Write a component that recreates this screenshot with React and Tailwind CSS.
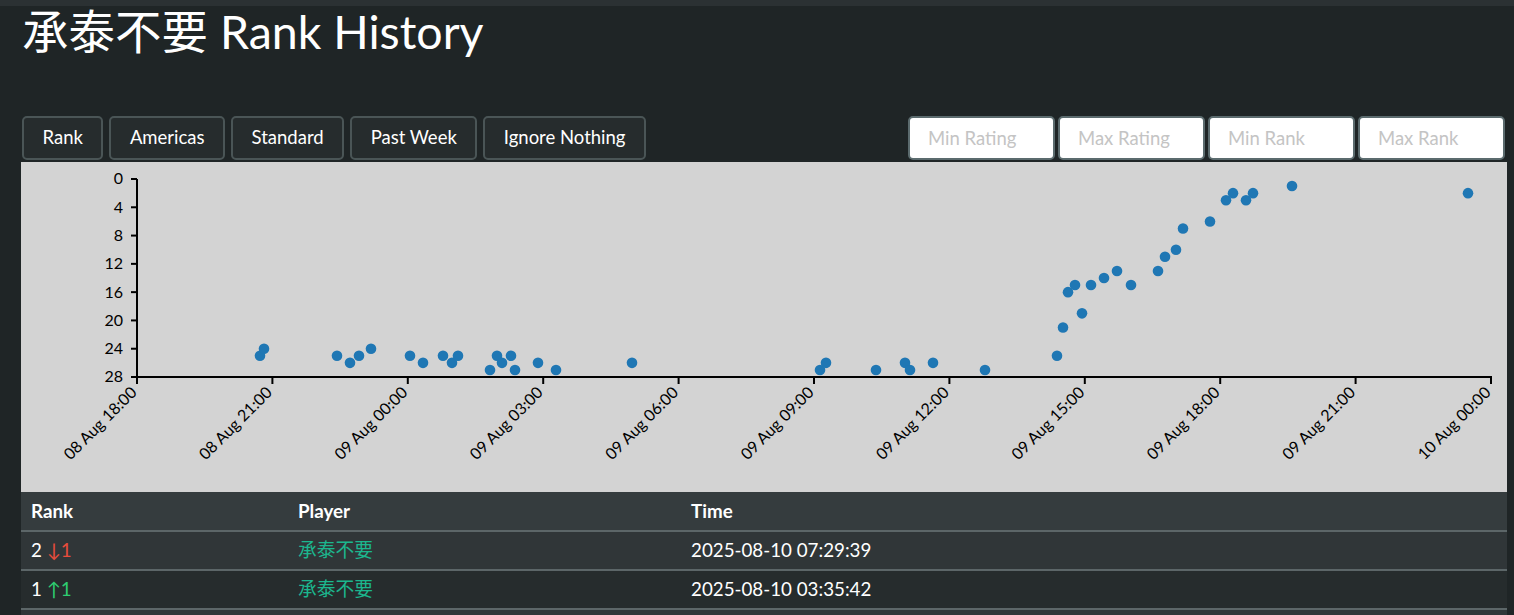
import React from "react";

const points = [
  [260, 25], [264, 24], [337, 25], [350, 26], [359, 25], [371, 24],
  [410, 25], [423, 26], [443, 25], [452, 26], [458, 25],
  [490, 27], [497, 25], [502, 26], [511, 25], [515, 27],
  [538, 26], [556, 27], [632, 26], [820, 27], [826, 26],
  [876, 27], [905, 26], [910, 27], [933, 26], [985, 27],
  [1057, 25], [1063, 21], [1068, 16], [1075, 15], [1082, 19],
  [1091, 15], [1104, 14], [1117, 13], [1131, 15], [1158, 13],
  [1165, 11], [1176, 10], [1183, 7], [1210, 6], [1226, 3],
  [1233, 2], [1246, 3], [1253, 2], [1292, 1], [1468, 2],
];

const xLabels = [
  "08 Aug 18:00", "08 Aug 21:00", "09 Aug 00:00", "09 Aug 03:00",
  "09 Aug 06:00", "09 Aug 09:00", "09 Aug 12:00", "09 Aug 15:00",
  "09 Aug 18:00", "09 Aug 21:00", "10 Aug 00:00",
];

const rows = [
  { rank: 2, dir: "down", delta: 1, time: "2025-08-10 07:29:39" },
  { rank: 1, dir: "up", delta: 1, time: "2025-08-10 03:35:42" },
];

const X0 = 116;
const X1 = 1470;
const Y0 = 17;
const Y1 = 215;
const yFor = (r) => Y0 + (r / 28) * (Y1 - Y0);

const Chart = () => (
  <svg width="1486" height="329" className="block">
    {/* y axis */}
    <line x1={X0} y1={Y0} x2={X0} y2={Y1} stroke="#000" strokeWidth="2" />
    {[0, 4, 8, 12, 16, 20, 24, 28].map((v) => (
      <g key={v} transform={`translate(${X0},${yFor(v)})`}>
        <line x1="-6" x2="0" stroke="#000" strokeWidth="2" />
        <text x="-14" dy="0.34em" textAnchor="end" fontSize="16" fill="#000">
          {v}
        </text>
      </g>
    ))}
    {/* x axis */}
    <line x1={X0} y1={Y1} x2={X1 + 1} y2={Y1} stroke="#000" strokeWidth="2" />
    {xLabels.map((l, i) => {
      const x = X0 + (i * (X1 - X0)) / 10;
      return (
        <g key={l} transform={`translate(${x},${Y1})`}>
          <line y1="0" y2="7" stroke="#000" strokeWidth="2" />
          <text
            transform="rotate(-45)"
            x="0"
            y="9"
            dx="-0.7em"
            dy="0.2em"
            textAnchor="end"
            fontSize="16"
            fill="#000"
          >
            {l}
          </text>
        </g>
      );
    })}
    {points.map(([x, r], i) => (
      <circle key={i} cx={x - 21} cy={yFor(r)} r="5.3" fill="#1f77b4" />
    ))}
  </svg>
);

const App = () => {
  const buttons = ["Rank", "Americas", "Standard", "Past Week", "Ignore Nothing"];
  const inputs = ["Min Rating", "Max Rating", "Min Rank", "Max Rank"];

  return (
    <div
      className="min-h-screen bg-[#1f2526] text-white"
      style={{ fontFamily: 'Lato, "Noto Sans CJK SC", sans-serif' }}
    >
      <div className="h-[6px] bg-[#2b3133]" />
      <div className="pl-[21px] pr-[7px]">
        <div className="h-[110px]">
          <h1 className="-translate-y-[2px] ml-px text-[46.5px] leading-[55px] font-normal">
            承泰不要 Rank History
          </h1>
        </div>

        <div className="flex items-end justify-between">
          <div className="flex gap-[6px] pl-px">
            {buttons.map((b) => (
              <button
                key={b}
                className="h-[44px] px-[18.5px] rounded-[5px] border-2 border-[#4a5556] bg-[#262c2d] text-[18.5px] text-white"
              >
                {b}
              </button>
            ))}
          </div>
          <div className="flex gap-[3px] pr-[2px]">
            {inputs.map((p) => (
              <input
                key={p}
                placeholder={p}
                className="h-[44px] w-[147px] rounded-[5px] border-2 border-[#5b6b6e] bg-white pl-[18px] text-[18.5px] text-gray-800 outline-none placeholder:text-[#c4c4c4]"
              />
            ))}
          </div>
        </div>

        <div className="mt-[2px] bg-[#d3d3d3] h-[330px]">
          <Chart />
        </div>

        <table className="w-full border-collapse text-[18.75px]">
          <thead>
            <tr className="bg-[#353c3e] h-[39px] border-b-2 border-[#5c6668]">
              <th className="w-[267px] pl-[10px] text-left font-bold">Rank</th>
              <th className="w-[393px] pl-[10px] text-left font-bold">Player</th>
              <th className="pl-[10px] text-left font-bold">Time</th>
            </tr>
          </thead>
          <tbody>
            {rows.map((r, i) => (
              <tr
                key={i}
                className={`h-[39px] border-b-2 border-[#5c6668] ${
                  i % 2 === 0 ? "bg-[#303638]" : "bg-[#262c2d]"
                }`}
              >
                <td className="pl-[10px]">
                  {r.rank}{" "}
                  {r.dir === "down" ? (
                    <span className="text-[#e74c3c]">↓{r.delta}</span>
                  ) : (
                    <span className="text-[#2ecc71]">↑{r.delta}</span>
                  )}
                </td>
                <td className="pl-[10px] text-[#1cb68e]">承泰不要</td>
                <td className="pl-[10px]">{r.time}</td>
              </tr>
            ))}
            <tr className="h-[39px] bg-[#303638]">
              <td colSpan={3} />
            </tr>
          </tbody>
        </table>
      </div>
    </div>
  );
};

export default App;
